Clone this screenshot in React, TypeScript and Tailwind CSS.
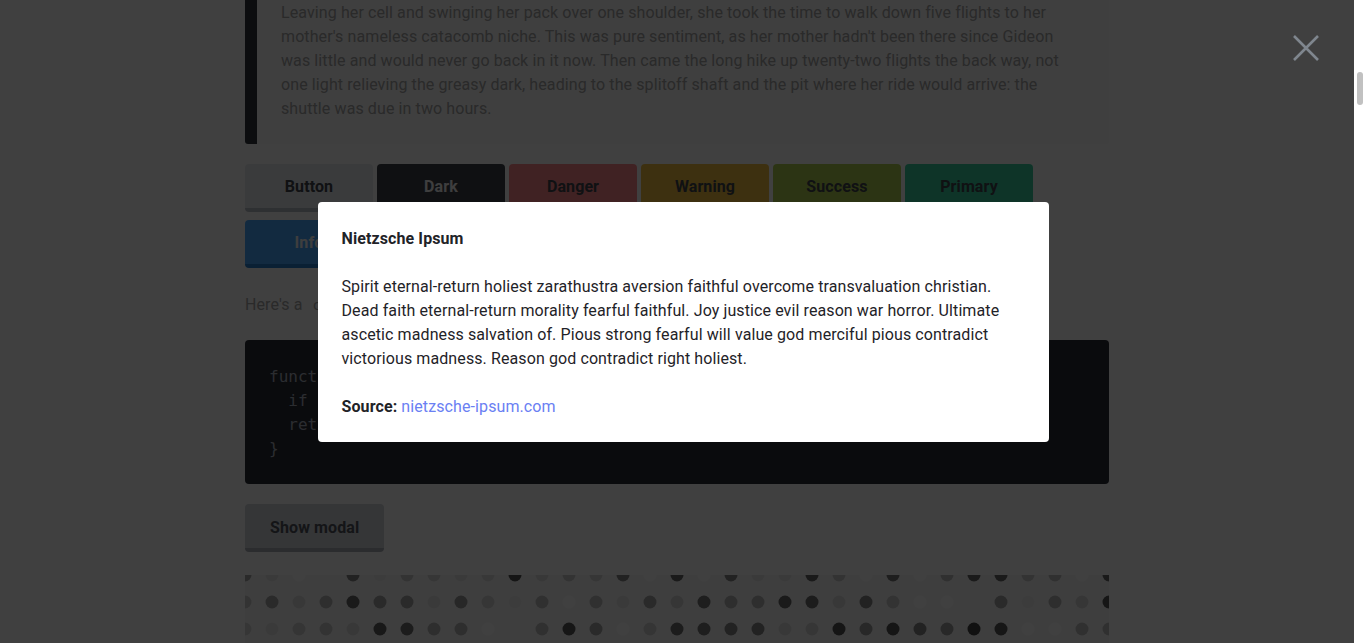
import { useLayoutEffect, useRef } from 'react'

const FONT = 'font-["Roboto",_"Liberation_Sans",_sans-serif] tracking-[0.1px]'

/* shade of each dot, as seen through the backdrop (00 = black, 40 = page) */
const DOT_ROWS = [
  '2a3a403e223c33363a38153833362240 1a40223a3a1a33401e40301a1a333040 1a',
  '332a382e1a2a2a3a27363c3040303a2a 361e2e2e1a1c3822334040 3e2a3c2e3616 33',
  '363a353338181c2e2e403e30162a4035 1c1e222238361528152228111640403030 3a',
  '3a30221a36402a3c331e2e40382a3622 303a1c40332e2a3e1a36403a22303c2e33 40',
  '22363a40302e1a3c3328403a36221e3a 2e33403c1a3036222a403a301c38362e 30',
]

const shades = DOT_ROWS.map((row) => {
  const s = row.replace(/\s/g, '')
  const out: number[] = []
  for (let i = 0; i < s.length; i += 2) out.push(parseInt(s.slice(i, i + 2), 16))
  return out
})

const buttons = [
  { label: 'Button', cls: 'bg-[#e8ebef] border-[#b9bec6] text-[#40454c]' },
  { label: 'Dark', cls: 'bg-[#3c4048] border-[#23262b] text-[#f5f6f8]' },
  { label: 'Danger', cls: 'bg-[#ff888c] border-[#d9585e] text-[#40454c]' },
  { label: 'Warning', cls: 'bg-[#f4c040] border-[#c8951c] text-[#40454c]' },
  { label: 'Success', cls: 'bg-[#b0d050] border-[#86a52c] text-[#40454c]' },
  { label: 'Primary', cls: 'bg-[#38d0a0] border-[#1ea37a] text-[#40454c]' },
  { label: 'Info', cls: 'bg-[#4aa8ff] border-[#2a7fd0] text-[#f5f6f8]' },
]

export default function App() {
  const scroller = useRef<HTMLDivElement>(null)
  const quote = useRef<HTMLQuoteElement>(null)

  // the page is scrolled down to the blockquote, as it was when the modal opened
  useLayoutEffect(() => {
    if (scroller.current && quote.current) {
      scroller.current.scrollTop = quote.current.offsetTop + 24
    }
  }, [])

  return (
    <div className={`flex h-screen w-full overflow-hidden bg-white text-[16px] leading-6 ${FONT}`}>
      <div className="relative min-w-0 flex-1">
        <div ref={scroller} className="relative h-full overflow-hidden">
          <main className="mx-auto max-w-[864px] pt-10 pb-40 text-[#a6a6a6]">
            <h2 className="mb-4 text-[28px] font-bold leading-9 text-[#a6a6a6]">Blockquote</h2>
            <p className="mb-6">
              Quotes are set off from the text with a heavy rule on the left and a tinted
              background.
            </p>

            <blockquote
              ref={quote}
              className="rounded-[3px] border-l-[12px] border-[#31363d] bg-[#fbfbfb] px-6 pt-[25px] pb-[23px]"
            >
              Leaving her cell and swinging her pack over one shoulder, she took the time to walk
              down five flights to her mother's nameless catacomb niche. This was pure sentiment,
              as her mother hadn't been there since Gideon was little and would never go back in
              it now. Then came the long hike up twenty-two flights the back way, not one light
              relieving the greasy dark, heading to the splitoff shaft and the pit where her ride
              would arrive: the shuttle was due in two hours.
            </blockquote>

            <div className="mt-5 flex flex-wrap gap-x-1 gap-y-2">
              {buttons.map((b) => (
                <button
                  key={b.label}
                  className={`h-12 w-32 rounded-[4px] border-b-4 pt-0.5 font-bold ${b.cls}`}
                >
                  {b.label}
                </button>
              ))}
            </div>

            <p className="mt-[25px]">
              Here's a{' '}
              <code className="rounded-[3px] bg-[#fdfdfd] px-1.5 py-0.5 font-['DejaVu_Sans_Mono',_monospace] text-[14px]">
                code
              </code>{' '}
              block, with a short function in it:
            </p>

            <pre className="mt-[23px] rounded-[4px] bg-[#282c34] px-6 pt-[25px] pb-[23px] font-['DejaVu_Sans_Mono',_monospace] text-[16px] leading-6 tracking-normal text-[#abb2bf]">
              {`function double(x) {
  if (!x) return 0
  return x * 2
}`}
            </pre>

            <button className="mt-5 h-12 rounded-[4px] border-b-4 border-[#abb0b8] bg-[#d2d6dc] px-[25px] pt-[3px] font-bold text-[#50555c]">
              Show modal
            </button>

            <div className="mt-[23px] h-[160px] overflow-hidden bg-[#f8f8f8]">
              <svg width="864" height="160" className="block">
                {shades.map((row, j) =>
                  row.map((d, k) => {
                    const c = Math.min(255, d * 4)
                    return (
                      <circle
                        key={`${j}-${k}`}
                        cx={k * 27}
                        cy={j * 27}
                        r="6.5"
                        fill={`rgb(${c},${c},${c})`}
                      />
                    )
                  }),
                )}
              </svg>
            </div>
          </main>
        </div>

        {/* backdrop */}
        <div className="absolute inset-0 bg-black/75">
          <button aria-label="Close" className="absolute top-[35px] right-[35px] text-[#7f868e]">
            <svg width="26" height="26" viewBox="0 0 26 26" className="block">
              <path d="M1 1 L25 25 M25 1 L1 25" stroke="currentColor" strokeWidth="2.6" />
            </svg>
          </button>
        </div>
      </div>

      {/* scrollbar */}
      <div className="w-3 shrink-0 bg-white pt-[72px]">
        <div className="mx-auto h-[33px] w-[6px] rounded-full bg-[#c1c1c1]" />
      </div>

      <div className="pointer-events-none fixed inset-0 flex items-center justify-center">
        <div className="pointer-events-auto w-[731px] rounded-[4px] bg-white px-6 pt-[25px] pb-[23px] text-[#1f2328]">
          <p className="font-bold">Nietzsche Ipsum</p>
          <p className="mt-6">
            Spirit eternal-return holiest zarathustra aversion faithful overcome transvaluation
            christian. Dead faith eternal-return morality fearful faithful. Joy justice evil reason
            war horror. Ultimate ascetic madness salvation of. Pious strong fearful will value god
            merciful pious contradict victorious madness. Reason god contradict right holiest.
          </p>
          <p className="mt-6">
            <b>Source:</b> <a className="text-[#6a80f3]">nietzsche-ipsum.com</a>
          </p>
        </div>
      </div>
    </div>
  )
}
